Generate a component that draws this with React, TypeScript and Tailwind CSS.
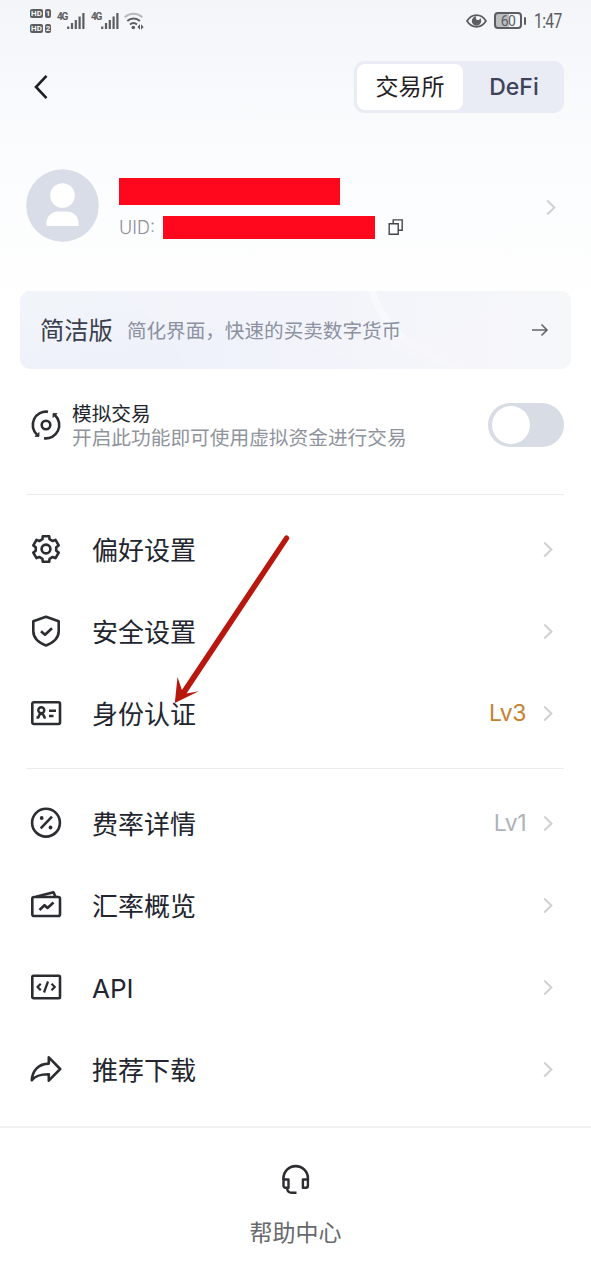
import type { ReactNode } from "react";

type MenuItem = {
  label: string;
  icon: ReactNode;
  level?: string;
  levelClass?: string;
};

const accountItems: MenuItem[] = [
  { label: "偏好设置", icon: <GearIcon /> },
  { label: "安全设置", icon: <ShieldIcon /> },
  { label: "身份认证", icon: <IdCardIcon />, level: "Lv3", levelClass: "text-[#c4812e]" },
];

const moreItems: MenuItem[] = [
  { label: "费率详情", icon: <PercentIcon />, level: "Lv1", levelClass: "text-[#aeb2b9]" },
  { label: "汇率概览", icon: <RateIcon /> },
  { label: "API", icon: <CodeIcon /> },
  { label: "推荐下载", icon: <ShareIcon /> },
];

export default function App() {
  return (
    <div className="relative flex h-[1280px] w-[591px] flex-col overflow-hidden bg-white bg-linear-to-b from-[#f4f5f8] via-[#fafbfd] via-10% to-white to-25% font-['Inter','Noto_Sans_CJK_SC',sans-serif] text-[#22252e]">
      <StatusBar />

      <header className="flex h-[92px] items-center justify-between pr-[27px] pl-[33px]">
        <svg className="h-[26px] w-4" viewBox="0 0 16 26" fill="none" stroke="#1e1f22" strokeWidth="2.6">
          <path d="M13.5 1.8 3 13l10.5 11.2" />
        </svg>
        <div className="flex h-[52px] w-[210px] rounded-[10px] bg-[#e9ebf5] p-[3px] text-[23px]">
          <div className="flex w-[106px] items-center justify-center rounded-lg bg-white pt-px text-[#1f2127]">
            交易所
          </div>
          <div className="flex flex-1 items-center justify-center pl-1 font-medium text-[#3d4258]">
            DeFi
          </div>
        </div>
      </header>

      <section className="mt-9 flex h-[73px] items-center pr-[35px] pl-[26px]">
        <svg className="size-[73px]" viewBox="0 0 73 73">
          <circle cx="36.5" cy="36.5" r="36.3" fill="#d9dde7" />
          <circle cx="36.5" cy="26.5" r="12.3" fill="#fff" />
          <path d="M20.5 57v-3A11.5 11.5 0 0 1 32 42.5h9A11.5 11.5 0 0 1 52.5 54v3z" fill="#fff" />
        </svg>
        <div className="ml-5 flex flex-1 flex-col pt-[5px]">
          <div className="h-[27px] w-[221px] bg-[#ff081e]" />
          <div className="mt-[11px] flex h-[23px] items-center">
            <span className="w-11 text-[18px] font-light text-[#8d9097]">UID:</span>
            <div className="h-[23px] w-[212px] bg-[#ff081e]" />
            <svg className="ml-[13px] size-4" viewBox="0 0 16 16" fill="none" stroke="#44464c" strokeWidth="1.4">
              <path d="M1.2 4.8h9v10.4h-9z" />
              <path d="M5.2 4.8V.9h9v10.4h-4" />
            </svg>
          </div>
        </div>
        <div className="pt-[3px]">
          <Chevron />
        </div>
      </section>

      <section className="relative mx-5 mt-[49px] flex h-[78px] items-center overflow-hidden rounded-[10px] bg-linear-to-r from-[#f0f4f9] via-[#f3f4fb] to-[#f6f7f9] pr-[22px] pl-5">
        <BannerWaves />
        <span className="relative pt-px text-[24.3px] text-[#3a3e4d]">简洁版</span>
        <span className="relative ml-[14px] pt-[3px] text-[19.6px] whitespace-nowrap text-[#8b91a0]">
          简化界面，快速的买卖数字货币
        </span>
        <svg className="relative ml-auto h-[14px] w-[18px]" viewBox="0 0 18 14" fill="none" stroke="#62656c" strokeWidth="1.6">
          <path d="M1 7h14.5M10.5 1.5 16 7l-5.5 5.5" />
        </svg>
      </section>

      <section className="flex h-[125px] items-center pr-[27px] pb-[14px] pl-[30px]">
        <SimulateIcon />
        <div className="ml-2.5 flex flex-col pt-[3px] text-[19.7px] leading-6 whitespace-nowrap">
          <span>模拟交易</span>
          <span className="text-[#8f949d]">开启此功能即可使用虚拟资金进行交易</span>
        </div>
        <div className="ml-auto flex h-11 w-[76px] items-center rounded-full bg-[#d8dce4] px-1">
          <div className="size-[38px] rounded-full bg-white" />
        </div>
      </section>

      <Menu items={accountItems} />
      <Menu items={moreItems} />

      <footer className="mt-[2px] flex flex-1 flex-col items-center border-t-2 border-[#f1f1f3] pt-[36px]">
        <HeadsetIcon />
        <span className="mt-[21px] text-[23px] leading-8 text-[#66686d]">帮助中心</span>
      </footer>

      {/* hand-drawn pointer over the verification row */}
      <svg className="absolute top-[530px] left-[165px] h-[180px] w-[130px]" viewBox="165 530 130 180" fill="#b8170e">
        <path d="M284.6 536.3a2.7 2.7 0 0 1 4.4 3L186.5 693.5l12.3-2.3L174.8 703l2.7-26 4.4 13z" />
      </svg>
    </div>
  );
}

function Menu({ items }: { items: MenuItem[] }) {
  return (
    <nav>
      <div className="mr-[27px] ml-[26px] h-px bg-[#eaecee]" />
      <div className="flex flex-col pt-[13px] pb-[14px]">
        {items.map((item) => (
          <div key={item.label} className="flex h-[82px] items-center pr-[38px] pl-[30px]">
            <span className="flex size-8 items-center justify-center">{item.icon}</span>
            <span className="ml-[30px] pt-[3px] text-[26px]">{item.label}</span>
            <span className={`mr-[17px] ml-auto pt-px text-[23px] tracking-[-0.5px] ${item.levelClass ?? ""}`}>
              {item.level}
            </span>
            <Chevron />
          </div>
        ))}
      </div>
    </nav>
  );
}

function BannerWaves() {
  return (
    <svg className="absolute inset-0 h-full w-full" viewBox="0 0 551 78">
      <defs>
        <linearGradient id="wave-left" x1="0" y1="0" x2="0.4" y2="1">
          <stop offset="0" stopColor="#f1f5f9" />
          <stop offset="1" stopColor="#eff1fa" />
        </linearGradient>
        <linearGradient id="wave-low" x1="0" y1="0" x2="1" y2="0">
          <stop offset="0" stopColor="#edf0fa" />
          <stop offset="1" stopColor="#f2f4fa" />
        </linearGradient>
      </defs>
      <path d="M0 78V0h92c34 18 60 42 76 78z" fill="url(#wave-left)" />
      <path d="M168 78C160 60 150 46 138 32c70 6 160 16 210 46z" fill="url(#wave-low)" opacity="0.6" />
      <path d="M348 0c10 34 42 62 88 78h8C400 60 364 34 356 0z" fill="#fafbfd" opacity="0.6" />
      <path d="M356 46c56 4 104-14 136-46h59v78H436c-30-6-56-16-80-32z" fill="#f6f7f9" opacity="0.7" />
    </svg>
  );
}

function StatusBar() {
  return (
    <div className="flex h-[41px] items-center justify-between pr-[31px] pl-[30px] text-[#5c5d60]">
      <div className="flex items-center">
        <div className="flex flex-col gap-[6px]">
          <SimBadge slot="1" />
          <SimBadge slot="2" />
        </div>
        <Signal className="ml-[6px]" />
        <Signal className="ml-[6px]" />
        <svg className="ml-[5px] h-[18px] w-5" viewBox="0 0 20 18" fill="none" stroke="currentColor" strokeWidth="2">
          <path d="M.8 5.2a13 13 0 0 1 17.5 0" stroke="#b9babd" />
          <path d="M3.3 9a9.3 9.3 0 0 1 12.6 0M6 12.5a5.4 5.4 0 0 1 7 0" />
          <circle cx="9.3" cy="15.5" r="1.8" fill="currentColor" stroke="none" />
          <path d="m16 12.3-2.6 2.7 2.6 2.7zM17 12.3l2.6 2.7-2.6 2.7z" fill="currentColor" stroke="none" />
        </svg>
      </div>
      <div className="flex items-center">
        <svg className="h-[14px] w-[21px]" viewBox="0 0 21 14" fill="none" stroke="currentColor" strokeWidth="1.8">
          <path d="M1 7c5-7.8 14-7.8 19 0-5 7.8-14 7.8-19 0z" />
          <path d="M10.5 2.3a4.7 4.7 0 1 0 4.7 4.7 4.7 4.7 0 0 0-1-2.9A2.2 2.2 0 1 1 10.500 2.300z" fill="currentColor" stroke="none" />
        </svg>
        <div className="ml-[7px] flex h-[17px] w-7 items-center justify-center rounded-[4px] border-2 border-current bg-linear-to-r from-[#bcbdc0] from-55% to-transparent to-55% font-[Roboto] text-[14px] leading-none tracking-[-0.5px]">
          60
        </div>
        <div className="ml-[2px] h-2 w-0.5 rounded-sm bg-current" />
        <span className="ml-2 w-[26px] origin-left scale-x-[0.78] font-[Roboto] text-[20px] leading-none tracking-[-0.8px] whitespace-nowrap">
          1:47
        </span>
      </div>
    </div>
  );
}

function SimBadge({ slot }: { slot: string }) {
  return (
    <div className="flex h-[9px] gap-[2px] font-[Roboto] text-[8px] leading-[9px] font-bold text-[#f6f7f9]">
      <span className="w-[13px] rounded-[2px] bg-[#5c5d60] text-center">HD</span>
      <span className="w-[6px] rounded-[2px] bg-[#5c5d60] text-center">{slot}</span>
    </div>
  );
}

function Signal({ className }: { className: string }) {
  return (
    <div className={`flex h-[18px] ${className}`}>
      <span className="w-[10px] font-[Roboto] text-[10px] leading-[9px] font-bold tracking-[-1.2px]">4G</span>
      <svg className="h-[18px] w-[18px]" viewBox="0 0 18 18" stroke="currentColor" strokeWidth="2.2">
        <path d="M1.2 17v-2.5M5 17v-6M8.8 17V8M12.6 17V4.5M16.4 17V1" />
      </svg>
    </div>
  );
}

function Chevron() {
  return (
    <svg className="h-[17px] w-2.5" viewBox="0 0 10 17" fill="none" stroke="#cfd1d5" strokeWidth="2">
      <path d="M1.2 1.5 8.4 8.5l-7.2 7" />
    </svg>
  );
}

function LineIcon({ children }: { children: ReactNode }) {
  return (
    <svg
      className="size-8 shrink-0"
      viewBox="0 0 32 32"
      fill="none"
      stroke="#2b2d31"
      strokeWidth="2.6"
      strokeLinejoin="round"
    >
      {children}
    </svg>
  );
}

function SimulateIcon() {
  return (
    <LineIcon>
      <path d="M18 2.8A13.3 13.3 0 0 0 7 25.7M14 29.200A13.3 13.3 0 0 0 25 6.300" />
      <circle cx="16" cy="16" r="4.3" />
      <path d="M5 27.500h4v-4zM27 4.500h-4v4z" fill="#2b2d31" strokeWidth="0.8" />
    </LineIcon>
  );
}

function GearIcon() {
  // six teeth, four corners each: valley, tip, tip, valley
  const corners = [-90, -30, 30, 90, 150, 210].flatMap((angle) =>
    [
      [angle - 20, 10.4],
      [angle - 14, 13.2],
      [angle + 14, 13.2],
      [angle + 20, 10.4],
    ].map(([deg, r]) => {
      const rad = (deg * Math.PI) / 180;
      return `${(16 + r * Math.cos(rad)).toFixed(2)},${(16 + r * Math.sin(rad)).toFixed(2)}`;
    })
  );

  return (
    <LineIcon>
      <polygon points={corners.join(" ")} />
      <circle cx="16" cy="16" r="4.4" />
    </LineIcon>
  );
}

function ShieldIcon() {
  return (
    <LineIcon>
      <path d="M16 1.8 28.7 6.3V16c0 7.2-4.7 11.5-12.7 14.5C8 27.5 3.3 23.2 3.3 16V6.3z" />
      <path d="m11 16.3 4 3.5 7-6.5" />
    </LineIcon>
  );
}

function IdCardIcon() {
  return (
    <LineIcon>
      <rect x="2.3" y="5.3" width="27.7" height="21.7" rx="1.5" />
      <circle cx="11.3" cy="13.3" r="3" strokeWidth="2.4" />
      <path d="M6.5 20.5h2c.2-2.3 1-3.6 2.8-3.6s2.8 1.3 3 3.6h1.500M19 13.7h7M19 19h4.5" strokeWidth="2.4" />
    </LineIcon>
  );
}

function PercentIcon() {
  return (
    <LineIcon>
      <circle cx="16" cy="15.7" r="13.9" />
      <path d="M10.7 21.3 22 9.7" />
      <circle cx="11.7" cy="11" r="1.9" fill="#2b2d31" stroke="none" />
      <circle cx="20.5" cy="20.5" r="1.9" fill="#2b2d31" stroke="none" />
    </LineIcon>
  );
}

function RateIcon() {
  return (
    <LineIcon>
      <rect x="2.3" y="8" width="27.7" height="19" rx="1.8" />
      <path d="M6 7.7 23.5 3.2l2 4.5" />
      <path d="m9.5 21 5-4.8 3 2.8 6-5.5" />
    </LineIcon>
  );
}

function CodeIcon() {
  return (
    <LineIcon>
      <rect x="2.3" y="4.8" width="27.7" height="22.5" rx="1.2" />
      <path d="M10.8 12.7 7.5 16l3.3 3.3M18 10.5l-4 11M21.5 12.7l3.3 3.3-3.3 3.3" strokeWidth="2.3" />
    </LineIcon>
  );
}

function ShareIcon() {
  return (
    <LineIcon>
      <path d="M18.8 4.3 30.2 16 18.8 27.7v-6.4C10.5 21.2 5.5 22.5 1.8 27.3 2.3 17.5 8.5 10.8 18.8 10.6z" />
    </LineIcon>
  );
}

function HeadsetIcon() {
  return (
    <LineIcon>
      <path d="M3.5 16v-1.700a12.2 12.2 0 0 1 24.4 0V16" />
      <path
        d="M3.5 15.5h5v8.3h-3a2 2 0 0 1-2-2zM27.900 15.5h-5v8.3h3a2 2 0 0 0 2-2zM7 24c.3 3.2 2 4.8 4.8 4.8h4.700"
        strokeWidth="2.4"
      />
    </LineIcon>
  );
}
